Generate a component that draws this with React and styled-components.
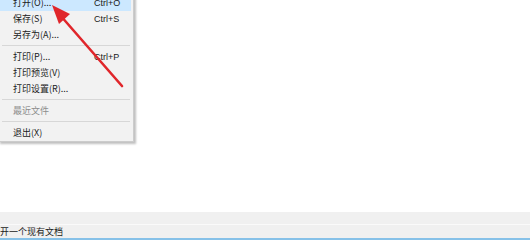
import React from 'react';
import styled, { createGlobalStyle } from 'styled-components';

const GlobalStyle = createGlobalStyle`
	html, body {
		margin: 0;
		padding: 0;
		background: #ffffff;
		overflow: hidden;
	}
	body {
		font-family: "Noto Sans CJK SC", "Liberation Sans", sans-serif;
	}
`;

const menuItems = [
	{ label: '打开(O)...', shortcut: 'Ctrl+O', active: true },
	{ label: '保存(S)', shortcut: 'Ctrl+S' },
	{ label: '另存为(A)...' },
	{ separator: true },
	{ label: '打印(P)...', shortcut: 'Ctrl+P' },
	{ label: '打印预览(V)' },
	{ label: '打印设置(R)...' },
	{ separator: true },
	{ label: '最近文件', disabled: true },
	{ separator: true },
	{ label: '退出(X)' }
];

function App () {
	return (
		<Page>
			<GlobalStyle />
			<Workspace>
				<Menu>
					{menuItems.map((item, i) =>
						item.separator ? (
							<Separator key={i} />
						) : (
							<MenuRow key={i} active={item.active} disabled={item.disabled}>
								<Label>{item.label}</Label>
								<Shortcut>{item.shortcut}</Shortcut>
							</MenuRow>
						)
					)}
				</Menu>
				<Arrow width="140" height="100" viewBox="0 0 140 100">
					<line x1="122" y1="86" x2="60" y2="15" stroke="#e0262b" strokeWidth="2.6" strokeLinecap="round" />
					<polygon points="52,5 70,14 59,24" fill="#e0262b" />
				</Arrow>
			</Workspace>
			<StatusArea>
				<Toolbar />
				<StatusBar>
					<StatusText>打开一个现有文档</StatusText>
				</StatusBar>
				<BlueEdge />
			</StatusArea>
		</Page>
	);
}

export default App;

const Page = styled.div`
	width: 530px;
	height: 241px;
	display: flex;
	flex-direction: column;
	background: #ffffff;
`;

const Workspace = styled.div`
	position: relative;
	flex: 1;
`;

const Menu = styled.div`
	width: 131px;
	margin-top: -6px;
	margin-left: -2px;
	padding: 0 2px 0 2px;
	background: #f2f2f2;
	border: 1px solid #cccccc;
	border-left: none;
	box-shadow: 2px 2px 2px rgba(0, 0, 0, 0.25);
	display: flex;
	flex-direction: column;
`;

const MenuRow = styled.div`
	height: 16px;
	display: flex;
	align-items: center;
	padding-left: 13px;
	background: ${(props) => (props.active ? '#cce8ff' : 'transparent')};
	color: ${(props) => (props.disabled ? '#8d8d8d' : '#1a1a1a')};
	font-size: 9px;
`;

const Label = styled.span`
	flex: 1;
	line-height: 16px;
`;

const Shortcut = styled.span`
	width: 37px;
	font-family: "Liberation Sans", sans-serif;
	font-size: 9px;
`;

const Separator = styled.div`
	height: 1px;
	margin: 2px 1px 3px 2px;
	background: #d7d7d7;
`;

const Arrow = styled.svg`
	position: absolute;
	left: 0;
	top: 0;
`;

const StatusArea = styled.div`
	display: flex;
	flex-direction: column;
`;

const Toolbar = styled.div`
	height: 12px;
	background: #f0f0f0;
	border-bottom: 1px solid #fafafa;
`;

const StatusBar = styled.div`
	height: 13px;
	display: flex;
	align-items: center;
	background: #f0f0f0;
	overflow: hidden;
`;

const StatusText = styled.span`
	margin-left: -9px;
	font-size: 9px;
	color: #1a1a1a;
	white-space: nowrap;
`;

const BlueEdge = styled.div`
	height: 2px;
	background: #86c1e8;
	margin-bottom: 1px;
`;
